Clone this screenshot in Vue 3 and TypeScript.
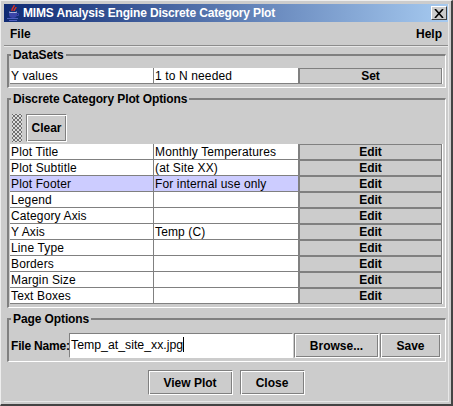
<script setup lang="ts">
const rows: { label: string; value: string; active?: boolean }[] = [
  { label: 'Plot Title', value: 'Monthly Temperatures' },
  { label: 'Plot Subtitle', value: '(at Site XX)' },
  { label: 'Plot Footer', value: 'For internal use only', active: true },
  { label: 'Legend', value: '' },
  { label: 'Category Axis', value: '' },
  { label: 'Y Axis', value: 'Temp (C)' },
  { label: 'Line Type', value: '' },
  { label: 'Borders', value: '' },
  { label: 'Margin Size', value: '' },
  { label: 'Text Boxes', value: '' },
]
</script>

<template>
  <div class="window">
    <div class="frame">
      <div class="titlebar">
        <svg class="logo" width="16" height="18" viewBox="0 0 16 18">
          <path d="M9 1c1 2-3 3-2 6M11 3c0 2-2 2-2 4" stroke="#e03020" fill="none" stroke-width="1.4" />
          <path d="M4 8c2 1 6 1 8 0" stroke="#c8d0f0" fill="none" />
          <path d="M4 9h8v2c0 2-2 3-4 3s-4-1-4-3z" fill="#3a44a8" />
          <path d="M12 9.5h1.5v2H12" stroke="#3a44a8" fill="none" />
          <path d="M2 14.5h11M4 16.5h8" stroke="#5060c0" stroke-width="1" />
        </svg>
        <span class="title">MIMS Analysis Engine Discrete Category Plot</span>
        <span class="close">
          <svg width="10" height="9" viewBox="0 0 10 9"><path d="M1 0l8 9M9 0L1 9" stroke="#000" stroke-width="1.6" /></svg>
        </span>
      </div>
      <div class="menubar"><span>File</span><span>Help</span></div>

      <fieldset class="group first">
        <legend>DataSets</legend>
        <div class="grid">
          <div class="cell">Y values</div>
          <div class="cell">1 to N needed</div>
          <div class="tablebtn">Set</div>
        </div>
      </fieldset>

      <fieldset class="group options">
        <legend>Discrete Category Plot Options</legend>
        <div class="toolbar">
          <span class="grip"></span>
          <button class="btn clear">Clear</button>
        </div>
        <div class="grid">
          <template v-for="r in rows" :key="r.label">
            <div class="cell" :class="{ active: r.active }">{{ r.label }}</div>
            <div class="cell" :class="{ active: r.active }">{{ r.value }}</div>
            <div class="tablebtn">Edit</div>
          </template>
        </div>
      </fieldset>

      <fieldset class="group page">
        <legend>Page Options</legend>
        <div class="file">
          <label>File Name:</label>
          <div class="input">Temp_at_site_xx.jpg<i class="caret"></i></div>
          <button class="btn browse">Browse...</button>
          <button class="btn save">Save</button>
        </div>
      </fieldset>

      <div class="actions">
        <button class="btn view">View Plot</button>
        <button class="btn close-btn">Close</button>
      </div>
    </div>
  </div>
</template>

<style>
html, body { margin: 0; background: #ccc; }
</style>

<style scoped>
.window {
  box-sizing: border-box;
  width: 453px;
  height: 406px;
  background: #ccc;
  border-style: solid;
  border-width: 1px 2px 2px 1px;
  border-color: #eee #444 #444 #eee;
  padding: 3px 2px 2px 3px;
  font: bold 12px "Liberation Sans", Arial, sans-serif;
  color: #000;
  overflow: hidden;
}
.frame {
  box-sizing: border-box;
  height: 100%;
  border-right: 1px solid #e8e8e8;
  border-bottom: 1px solid #e8e8e8;
}
.titlebar {
  height: 18px;
  display: flex;
  align-items: center;
  background: linear-gradient(90deg, #0f2a73, #a6caf0);
  color: #fff;
  padding: 0 1px;
}
.logo { flex: none; margin-right: 2px; }
.title { flex: 1; white-space: nowrap; letter-spacing: -0.16px; }
.close {
  width: 16px;
  height: 14px;
  box-sizing: border-box;
  background: #ccc;
  border: 1px solid;
  border-color: #fff #444 #444 #fff;
  display: flex;
  align-items: center;
  justify-content: center;
}
.menubar {
  height: 23px;
  display: flex;
  justify-content: space-between;
  align-items: center;
  padding: 0 6px;
  border-bottom: 1px solid #8c8c8c;
  box-shadow: 0 1px 0 #e8e8e8;
}
.group {
  margin: 0 2px 0 3px;
  padding: 0 2px 3px 1px;
  border-style: solid;
  border-width: 2px 1px 1px 2px;
  border-color: #808080 #fff #fff #808080;
  min-width: 0;
}
.group legend {
  padding: 0 2px;
  margin-left: 1px;
  line-height: 14px;
  letter-spacing: -0.1px;
}
.first { margin-top: 2px; padding-top: 6px; }
.options { margin-top: 4px; padding-top: 6px; }
.page { margin-top: 4px; padding-top: 7px; }
.grid {
  display: grid;
  grid-template-columns: 144px 145px 143px;
  grid-auto-rows: 16px;
  background: #fff;
}
.cell {
  box-sizing: border-box;
  background: #fff;
  border-right: 1px solid #808080;
  border-bottom: 1px solid #808080;
  font-weight: normal;
  padding-left: 1px;
  line-height: 16px;
  letter-spacing: 0.13px;
  white-space: nowrap;
  overflow: hidden;
}
.cell.active { background: #ccccff; }
.tablebtn {
  box-sizing: border-box;
  background: #ccc;
  border: 1px solid;
  border-color: #eee #666 #666 #eee;
  outline: 1px solid #808080;
  outline-offset: -1px;
  text-align: center;
  line-height: 15px;
}
.toolbar {
  height: 32px;
  box-sizing: border-box;
  padding: 2px 0 2px 2px;
  display: flex;
}
.grip {
  width: 10px;
  height: 28px;
  margin-right: 4px;
  background-color: #ddd;
  background-image:
    radial-gradient(#707070 0.9px, transparent 1px),
    radial-gradient(#707070 0.9px, transparent 1px);
  background-size: 4px 4px;
  background-position: 0 0, 2px 2px;
}
.btn {
  box-sizing: border-box;
  background: #ccc;
  font: bold 12px "Liberation Sans", Arial, sans-serif;
  color: #000;
  border: 1px solid;
  border-color: #808080 #fff #fff #808080;
  box-shadow: inset 1px 1px 0 #fff, inset -1px -1px 0 #808080;
  padding: 0;
}
.clear { width: 41px; height: 28px; }
.file { display: flex; align-items: center; height: 25px; padding-left: 1px; }
.file label { width: 58px; white-space: nowrap; letter-spacing: -0.2px; }
.input {
  box-sizing: border-box;
  width: 224px;
  height: 25px;
  background: #fff;
  border: 1px solid;
  border-color: #808080 #fff #fff #808080;
  font-weight: normal;
  font-size: 12.3px;
  line-height: 23px;
  padding-left: 1px;
  white-space: nowrap;
}
.caret { display: inline-block; width: 1px; height: 15px; background: #000; vertical-align: -3px; }
.browse { width: 85px; height: 25px; margin-left: 1px; }
.save { width: 61px; height: 25px; margin-left: 1px; }
.actions { display: flex; justify-content: center; gap: 7px; margin-top: 8px; }
.view { width: 85px; height: 25px; }
.close-btn { width: 65px; height: 25px; }
</style>
